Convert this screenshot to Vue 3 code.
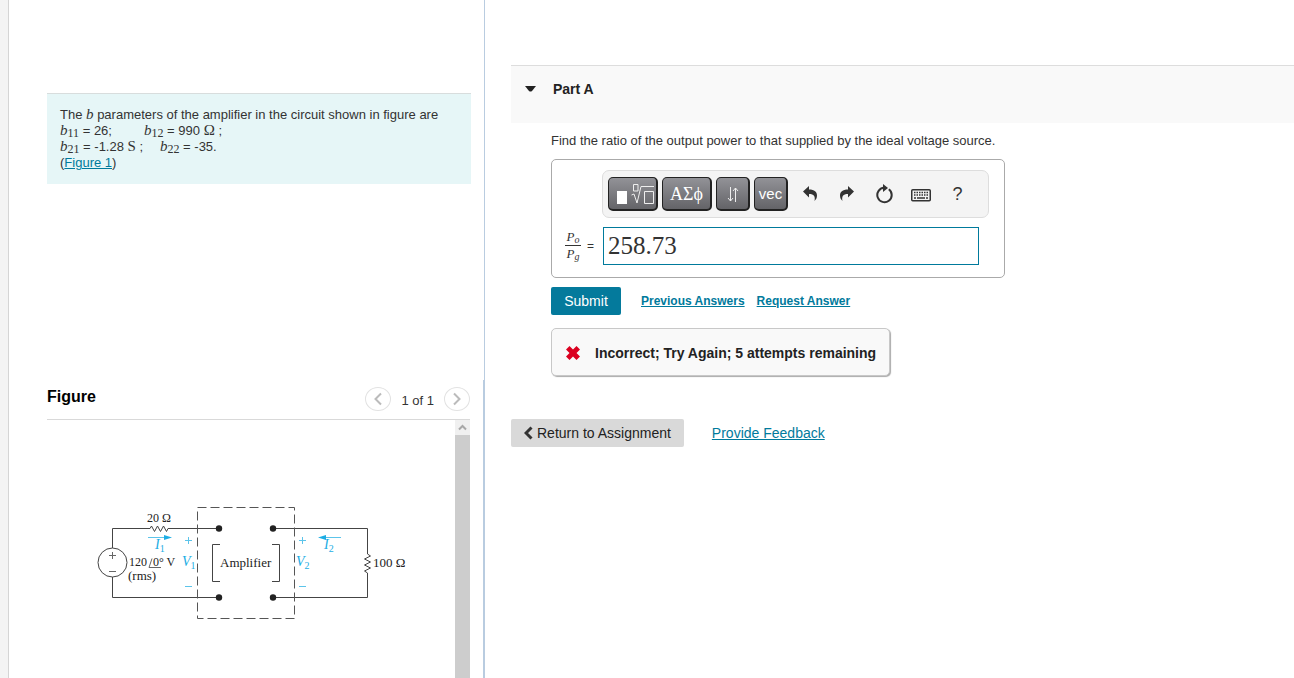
<script setup>
import { ref } from 'vue'

const answer = ref('258.73')
</script>

<template>
  <div class="page">
    <aside class="left">
      <section class="problem-pane">
        <div class="problem">
          <p>The <i class="sym">b</i> parameters of the amplifier in the circuit shown in figure are</p>
          <p class="params">
            <span class="first"><i class="sym">b</i><sub>11</sub> = 26;</span>
            <span><i class="sym">b</i><sub>12</sub> = 990 <span class="unit">Ω</span> ;</span>
          </p>
          <p class="params">
            <span class="second"><i class="sym">b</i><sub>21</sub> = -1.28 <span class="unit">S</span> ;</span>
            <span><i class="sym">b</i><sub>22</sub> = -35.</span>
          </p>
          <p class="last">(<a href="#figure">Figure 1</a>)</p>
        </div>
      </section>

      <section id="figure" class="figure-pane">
        <header class="figure-head">
          <h2>Figure</h2>
          <nav class="pager">
            <button type="button" aria-label="Previous figure">
              <svg width="10" height="14" viewBox="0 0 10 14"><path d="M8 1.5 2.5 7 8 12.5" /></svg>
            </button>
            <span>1 of 1</span>
            <button type="button" aria-label="Next figure">
              <svg width="10" height="14" viewBox="0 0 10 14"><path d="M2 1.5 7.5 7 2 12.5" /></svg>
            </button>
          </nav>
        </header>
        <div class="figure-body">
          <svg class="circuit" width="330" height="130" viewBox="90 500 330 130" role="img" aria-label="Amplifier circuit">
            <g class="wire">
              <path d="M112.500 548V528.500H150l1.500-2.500 3 5.500 3-5.500 3 5.500 3-5.500 3 5.500 1.500-3H219" />
              <path d="M112.500 577V597.500H219" />
              <circle cx="112.500" cy="562.500" r="14.500" />
              <path d="M273 528.500H367.500V554l3 2-6 3 6 3-6 3 6 3-6 3 3 2V597.500H273" />
              <path d="M220 544.500H212.500V581.500H220" />
              <path d="M272 544.500H279.500V581.500H272" />
            </g>
            <g class="thin">
              <path d="M109 555.500h7M112.500 552v7M109 571.500h7" />
              <path d="M149 567.500h12M149 567.500l3-9" />
            </g>
            <rect class="dashed" x="197.500" y="507.500" width="97" height="111" />
            <g class="dot">
              <circle cx="219" cy="528.500" r="3.200" /><circle cx="273" cy="528.500" r="3.200" />
              <circle cx="219" cy="597.500" r="3.200" /><circle cx="273" cy="597.500" r="3.200" />
            </g>
            <g class="cyan-line">
              <path d="M148 537.500h18M324 537.500h17" />
              <path d="M185 540.500h7M188.500 537v7M299 540.500h7M302.500 537v7" />
              <path d="M185 586.500h7M299 586.500h7" />
            </g>
            <path class="cyan" d="M164 535l8 2.500-8 2.500zM326 535l-8 2.500 8 2.500z" />
            <g class="label">
              <text x="147" y="522">20 Ω</text>
              <text x="129" y="566">120</text>
              <text x="153" y="566">0° V</text>
              <text class="wide" x="128" y="580">(rms)</text>
              <text class="wide" x="220" y="567">Amplifier</text>
              <text class="wide" x="373" y="567">100 Ω</text>
            </g>
            <g class="cyan label">
              <text x="155" y="549"><tspan class="it">I</tspan><tspan class="small" dy="3">1</tspan></text>
              <text x="182" y="566"><tspan class="it">V</tspan><tspan class="small" dy="3">1</tspan></text>
              <text x="296" y="566"><tspan class="it">V</tspan><tspan class="small" dy="3">2</tspan></text>
              <text x="324" y="549"><tspan class="it">I</tspan><tspan class="small" dy="3">2</tspan></text>
            </g>
          </svg>
          <div class="scrollbar">
            <button type="button" aria-label="Scroll up">
              <svg width="9" height="7" viewBox="0 0 9 7"><path d="M1 5.500 4.500 2 8 5.500" /></svg>
            </button>
            <div class="thumb"></div>
          </div>
        </div>
      </section>
    </aside>

    <main class="right">
      <header class="part-head">
        <svg width="11" height="6" viewBox="0 0 11 6"><path d="M0 0h11L7 5q-1.500 1-3 0z" /></svg>
        <h2>Part A</h2>
      </header>

      <div class="part-body">
        <p class="question">Find the ratio of the output power to that supplied by the ideal voltage source.</p>

        <div class="answer-box">
          <div class="toolbar">
            <button class="key wide-key" type="button" aria-label="Templates">
              <svg width="42" height="26" viewBox="0 0 42 26">
                <path class="white" d="M5 10h10v13H5z" />
                <path class="stroke" d="M21.500 3.500h4.500v6.500h-4.500zM19.500 14l2.500-1 3 9 4-16.500h13M32.500 10.500h9v12h-9z" />
              </svg>
            </button>
            <button class="key wide-key greek" type="button">ΑΣϕ</button>
            <button class="key" type="button" aria-label="Subscript and superscript">
              <svg width="14" height="18" viewBox="0 0 14 18">
                <path class="stroke" d="M4.500 2v14M2 13l2.500 3L7 13M9.500 17V3M7 6l2.500-3L12 6" />
              </svg>
            </button>
            <button class="key" type="button">vec</button>
            <button class="tool" type="button" aria-label="Undo">
              <svg width="14" height="16" viewBox="0 0 14 16"><path d="M0 5.500 6 0v3.500c5.500 0 8 2.500 8 6 0 2.500-1 4-2.500 5.500C12.500 10.500 11 8 6 8v3.500z" /></svg>
            </button>
            <button class="tool" type="button" aria-label="Redo">
              <svg width="14" height="16" viewBox="0 0 14 16"><path d="M14 5.500 8 0v3.500C2.500 3.500 0 6 0 9.500 0 12 1 13.500 2.500 15 1.500 10.500 3 8 8 8v3.500z" /></svg>
            </button>
            <button class="tool" type="button" aria-label="Reset">
              <svg width="18" height="20" viewBox="0 0 18 20">
                <path class="ring" d="M13.800 5.200A7.200 7.200 0 1 1 9 3.800" /><path d="M8 0l5 4-5 4z" />
              </svg>
            </button>
            <button class="tool" type="button" aria-label="Keyboard">
              <svg class="keyboard" width="20" height="16" viewBox="0 0 20 16">
                <rect x="0.750" y="3.750" width="18.500" height="11" rx="1" />
                <path class="dots" d="M3 6.500h14M3 9h14" /><path d="M3 12h2M6 12h8M15 12h2" />
              </svg>
            </button>
            <button class="tool help" type="button" aria-label="Help">?</button>
          </div>

          <div class="entry">
            <label class="ratio" for="answer">
              <span class="fraction">
                <span class="num"><i>P</i><sub><i>o</i></sub></span>
                <span class="den"><i>P</i><sub><i>g</i></sub></span>
              </span>
              <span>=</span>
            </label>
            <input id="answer" v-model="answer" type="text" autocomplete="off">
          </div>
        </div>

        <div class="actions">
          <button class="submit" type="button">Submit</button>
          <a href="#previous">Previous Answers</a>
          <a href="#request">Request Answer</a>
        </div>

        <div class="result" role="status">
          <svg width="14" height="14" viewBox="0 0 14 14"><path d="M3.500 0 7 3.500 10.500 0 14 3.500 10.500 7 14 10.500 10.500 14 7 10.500 3.500 14 0 10.500 3.500 7 0 3.500z" /></svg>
          <strong>Incorrect; Try Again; 5 attempts remaining</strong>
        </div>
      </div>

      <footer class="foot">
        <button type="button">
          <svg width="9" height="14" viewBox="0 0 9 14"><path d="M7.500 1.500 2 7l5.500 5.500" /></svg>
          Return to Assignment
        </button>
        <a href="#feedback">Provide Feedback</a>
      </footer>
    </main>
  </div>
</template>

<style>
body { margin: 0; background: #fff; }
</style>

<style scoped>
* { box-sizing: border-box; }
.page {
  display: flex;
  min-height: 100vh;
  padding-left: 8px;
  background: #f4f4f4;
  color: #333;
  font: 13px/16px "Liberation Sans", Arial, sans-serif;
}
p, h2 { margin: 0; }
button { padding: 0; border: 0; font: inherit; color: inherit; cursor: pointer; }
a { color: #007a9c; }
svg { display: block; flex: none; }

.left {
  display: flex;
  flex-direction: column;
  flex: 0 0 477px;
  background: #fff;
  border-left: 1px solid #d5d5d5;
}
.problem-pane {
  height: 380px;
  padding: 93px 13px 0 38px;
  border-right: 1px solid #b9cce0;
}
.problem {
  padding: 13px;
  background: #e6f6f7;
  border-top: 1px solid #d8dddd;
}
.problem p { height: 16px; white-space: nowrap; }
.params { display: flex; }
.params .first { width: 84px; }
.params .second { width: 100px; }
.sym, .unit, sub { font-family: "Liberation Serif", "Times New Roman", serif; line-height: 0; }
.sym, .unit { font-size: 15px; }
sub { font-size: 12px; vertical-align: -2px; }

.figure-pane {
  display: flex;
  flex-direction: column;
  flex: 1;
  padding: 0 13px 0 38px;
  border-right: 2px solid #b9cce0;
}
.figure-head {
  display: flex;
  justify-content: space-between;
  height: 40px;
  border-bottom: 1px solid #d9d9d9;
}
.figure-head h2 { padding-top: 7px; font-size: 16px; line-height: 20px; color: #000; }
.pager { display: flex; align-items: flex-start; gap: 10px; padding-top: 7px; }
.pager span { padding-top: 6px; }
.pager button {
  display: grid;
  place-items: center;
  width: 26px;
  height: 24px;
  background: #fff;
  border: 1px solid #e2e2e2;
  border-radius: 50%;
}
.pager path { fill: none; stroke: #bbb; stroke-width: 2; }
.figure-body { display: flex; flex: 1; justify-content: space-between; }
.circuit { margin: 80px 0 0 43px; }
.scrollbar { display: flex; flex-direction: column; width: 15px; }
.scrollbar button { display: grid; place-items: center; height: 15px; background: #f0f0f0; }
.scrollbar path { fill: none; stroke: #a8a8a8; stroke-width: 2; }
.thumb { flex: 1; background: #cdcdcd; }

.wire { fill: none; stroke: #444; stroke-width: 1; }
.thin { fill: none; stroke: #666; stroke-width: 1; }
.dashed { fill: none; stroke: #555; stroke-width: 1; stroke-dasharray: 9 4; }
.dot { fill: #222; }
.cyan-line { stroke: #5cc4ea; stroke-width: 1; }
.label { fill: #222; font: 12px "Liberation Serif", "Times New Roman", serif; }
.cyan { fill: #1cade4; }
.wide { font-size: 13px; }
.it { font-size: 14px; font-style: italic; }
.small { font-size: 10px; }

.right { flex: 1; min-width: 0; padding: 65px 0 0 26px; background: #fff; }
.part-head {
  display: flex;
  align-items: flex-start;
  gap: 17px;
  height: 58px;
  padding: 15px 14px 0;
  background: #f9f9f9;
  border-top: 1px solid #ddd;
}
.part-head svg { margin-top: 5px; }
.part-head path { fill: #222; }
.part-head h2 { font-size: 14px; line-height: 16px; color: #222; }
.part-body { padding: 10px 0 0 40px; }
.answer-box {
  width: 454px;
  max-width: 100%;
  margin-top: 10px;
  padding: 10px 15px 12px 13px;
  border: 1px solid #aaa;
  border-radius: 5px;
}
.toolbar {
  display: flex;
  align-items: center;
  gap: 4px;
  height: 48px;
  margin-left: 37px;
  padding: 0 5px;
  background: #f4f4f4;
  border: 1px solid #ddd;
  border-radius: 7px;
}
.key {
  display: grid;
  place-items: center;
  flex: none;
  width: 34px;
  height: 34px;
  color: #fff;
  font-size: 15px;
  background: linear-gradient(#929297, #646468);
  border: 1px solid #222;
  border-right-width: 2px;
  border-bottom-width: 2px;
  border-radius: 5px;
}
.wide-key { width: 50px; }
.greek { font-family: "Liberation Serif", "DejaVu Serif", serif; font-size: 18px; }
.white { fill: #fff; }
.stroke { fill: none; stroke: #eee; stroke-width: 1; }
.tool { display: grid; place-items: center; flex: none; width: 33px; height: 34px; background: none; color: #333; }
.key + .tool { margin-left: 1px; }
.tool path { fill: #333; }
.tool .ring { fill: none; stroke: #333; stroke-width: 2; }
.keyboard rect { fill: none; stroke: #333; stroke-width: 1.5; }
.keyboard path { fill: none; stroke: #333; stroke-width: 1.5; }
.keyboard .dots { stroke-dasharray: 1.5 1; }
.help { font-size: 18px; }
.entry { display: flex; align-items: center; margin-top: 9px; }
.ratio { display: flex; align-items: center; gap: 6px; width: 38px; font-size: 12px; }
.fraction { flex: none; font: 13px/16px "Liberation Serif", "Times New Roman", serif; }
.fraction span { display: block; width: 16px; height: 17px; text-align: center; white-space: nowrap; }
.fraction .num { border-bottom: 1px solid #333; }
.fraction sub { font-size: 10px; }
.entry input {
  flex: 1;
  min-width: 0;
  height: 38px;
  margin-right: 10px;
  padding: 0 4px;
  border: 1px solid #007a9c;
  outline: none;
  color: #333;
  font: 25px "Liberation Serif", "Times New Roman", serif;
}
.actions { display: flex; align-items: center; gap: 12px; margin-top: 9px; font-size: 12px; font-weight: bold; }
.submit {
  width: 70px;
  height: 28px;
  margin-right: 8px;
  background: #047a9c;
  border-radius: 2px;
  color: #fff;
  font-size: 14px;
  font-weight: normal;
}
.result {
  display: flex;
  align-items: center;
  gap: 15px;
  width: fit-content;
  margin-top: 13px;
  padding: 16px 13px 14px 14px;
  background: #f9f9f9;
  border: 1px solid #c8c8c8;
  border-radius: 5px;
  box-shadow: 1px 1px 1px #aaa;
  color: #222;
  font-size: 14px;
}
.result path { fill: #db0020; }
.foot { display: flex; align-items: center; gap: 28px; margin-top: 43px; font-size: 14px; }
.foot button {
  display: flex;
  align-items: center;
  gap: 4px;
  height: 28px;
  padding: 0 13px;
  background: #d9d9d9;
  border-radius: 2px;
  color: #222;
}
.foot path { fill: none; stroke: #333; stroke-width: 3; }
</style>
